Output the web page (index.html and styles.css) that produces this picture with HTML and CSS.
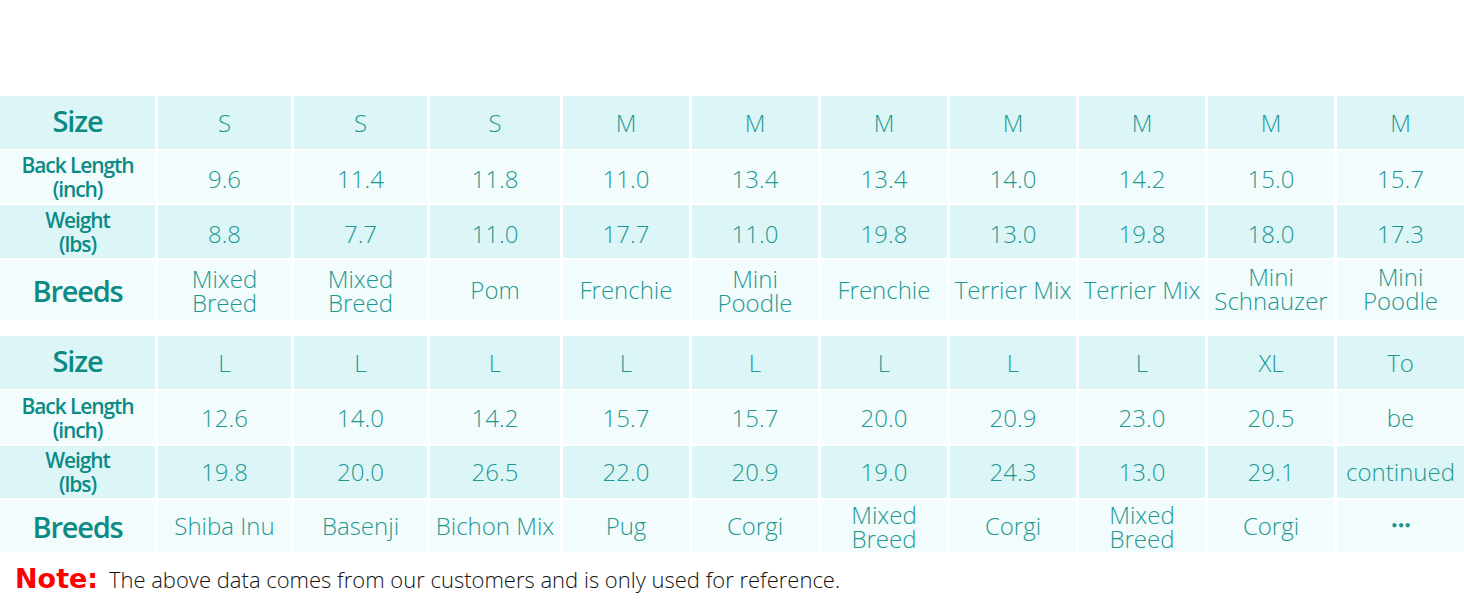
FILE: index.html
```html
<!DOCTYPE html>
<html>
<head>
<meta charset="utf-8">
<link rel="stylesheet" href="styles.css">
</head>
<body>
<div class="page">
  <div class="sheet sheet-top">
    <div class="cell hd tint"><span class="big raise">Size</span></div>
    <div class="cell tint">S</div><div class="cell tint">S</div><div class="cell tint">S</div>
    <div class="cell tint">M</div><div class="cell tint">M</div><div class="cell tint">M</div>
    <div class="cell tint">M</div><div class="cell tint">M</div><div class="cell tint">M</div><div class="cell tint">M</div>

    <div class="cell hd pale"><span class="small">Back Length<br>(inch)</span></div>
    <div class="cell pale low">9.6</div><div class="cell pale low">11.4</div><div class="cell pale low">11.8</div>
    <div class="cell pale low">11.0</div><div class="cell pale low">13.4</div><div class="cell pale low">13.4</div>
    <div class="cell pale low">14.0</div><div class="cell pale low">14.2</div><div class="cell pale low">15.0</div><div class="cell pale low">15.7</div>

    <div class="cell hd tint"><span class="small">Weight<br>(lbs)</span></div>
    <div class="cell tint low">8.8</div><div class="cell tint low">7.7</div><div class="cell tint low">11.0</div>
    <div class="cell tint low">17.7</div><div class="cell tint low">11.0</div><div class="cell tint low">19.8</div>
    <div class="cell tint low">13.0</div><div class="cell tint low">19.8</div><div class="cell tint low">18.0</div><div class="cell tint low">17.3</div>

    <div class="cell hd pale"><span class="big">Breeds</span></div>
    <div class="cell pale two">Mixed<br>Breed</div><div class="cell pale two">Mixed<br>Breed</div><div class="cell pale">Pom</div>
    <div class="cell pale">Frenchie</div><div class="cell pale two">Mini<br>Poodle</div><div class="cell pale">Frenchie</div>
    <div class="cell pale">Terrier Mix</div><div class="cell pale">Terrier Mix</div><div class="cell pale two up">Mini<br>Schnauzer</div><div class="cell pale two up">Mini<br>Poodle</div>
  </div>

  <div class="sheet sheet-bottom">
    <div class="cell hd tint"><span class="big raise">Size</span></div>
    <div class="cell tint">L</div><div class="cell tint">L</div><div class="cell tint">L</div>
    <div class="cell tint">L</div><div class="cell tint">L</div><div class="cell tint">L</div>
    <div class="cell tint">L</div><div class="cell tint">L</div><div class="cell tint">XL</div><div class="cell tint">To</div>

    <div class="cell hd pale"><span class="small">Back Length<br>(inch)</span></div>
    <div class="cell pale">12.6</div><div class="cell pale">14.0</div><div class="cell pale">14.2</div>
    <div class="cell pale">15.7</div><div class="cell pale">15.7</div><div class="cell pale">20.0</div>
    <div class="cell pale">20.9</div><div class="cell pale">23.0</div><div class="cell pale">20.5</div><div class="cell pale">be</div>

    <div class="cell hd tint"><span class="small">Weight<br>(lbs)</span></div>
    <div class="cell tint">19.8</div><div class="cell tint">20.0</div><div class="cell tint">26.5</div>
    <div class="cell tint">22.0</div><div class="cell tint">20.9</div><div class="cell tint">19.0</div>
    <div class="cell tint">24.3</div><div class="cell tint">13.0</div><div class="cell tint">29.1</div><div class="cell tint">continued</div>

    <div class="cell hd pale"><span class="big">Breeds</span></div>
    <div class="cell pale">Shiba Inu</div><div class="cell pale">Basenji</div><div class="cell pale">Bichon Mix</div>
    <div class="cell pale">Pug</div><div class="cell pale">Corgi</div><div class="cell pale two">Mixed<br>Breed</div>
    <div class="cell pale">Corgi</div><div class="cell pale two">Mixed<br>Breed</div><div class="cell pale">Corgi</div><div class="cell pale"><span class="dots">•••</span></div>
  </div>

  <p class="note"><span class="note-label">Note:</span> The above data comes from our customers and is only used for reference.</p>
</div>
</body>
</html>
```

FILE: styles.css
```css
html, body {
  margin: 0;
  padding: 0;
  background: #ffffff;
}

.page {
  width: 1464px;
  padding-top: 96px;
  font-family: "Open Sans", "Liberation Sans", sans-serif;
}

.sheet {
  display: grid;
  grid-template-columns: 155px 133px 133px 130px 126px 126px 126px 126px 126px 126px 1fr;
  column-gap: 3px;
  row-gap: 2px;
}

.sheet-top {
  grid-template-rows: 53px 52px 53px 60px;
}

.sheet-bottom {
  margin-top: 16px;
  grid-template-rows: 53px 53px 52px 52px;
}

.cell {
  display: flex;
  align-items: center;
  justify-content: center;
  text-align: center;
  color: #1f9892;
  font-weight: 300;
  font-size: 24px;
  line-height: 1;
  white-space: nowrap;
}

.cell.low {
  padding-top: 4px;
}

.cell.two {
  line-height: 24px;
  padding-top: 2px;
}

.cell.two.up {
  padding-top: 0;
  padding-bottom: 2px;
}

.tint {
  background: #dcf6f8;
}

.pale {
  background: #f2fcfc;
}

.hd {
  color: #0c8b85;
  font-weight: 600;
}

.big {
  font-size: 29px;
  letter-spacing: -1.2px;
}

.raise {
  margin-bottom: 4px;
}

.small {
  font-size: 21px;
  line-height: 24px;
  letter-spacing: -1.1px;
}

.dots {
  font-size: 12px;
  font-weight: 700;
  letter-spacing: -1px;
  font-family: "DejaVu Sans", sans-serif;
}

.note {
  margin: 12px 0 0 15px;
  line-height: 30px;
  font-size: 22px;
  font-weight: 300;
  color: #111111;
  font-family: "Open Sans", "Liberation Sans", sans-serif;
}

.note-label {
  color: #ff0000;
  font-family: "DejaVu Sans", sans-serif;
  font-weight: 700;
  font-size: 27px;
  margin-right: 5px;
}
```
